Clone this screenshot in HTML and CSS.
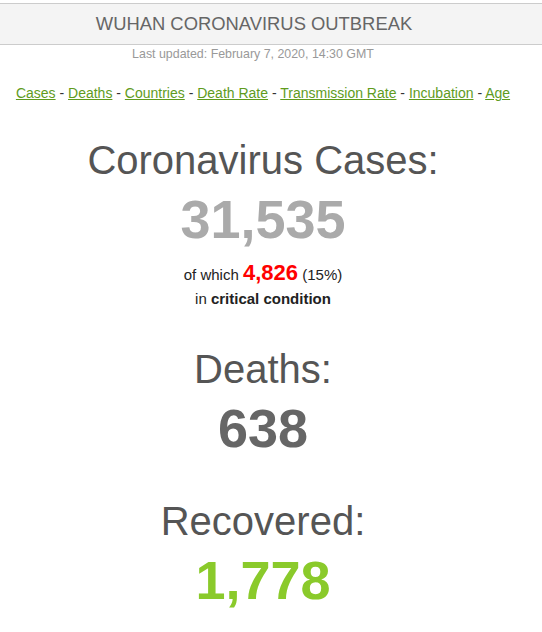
FILE: index.html
```html
<!DOCTYPE html>
<html>
<head>
<meta charset="utf-8">
<link rel="stylesheet" href="styles.css">
</head>
<body>
<div class="header">WUHAN CORONAVIRUS OUTBREAK</div>
<div class="updated">Last updated: February 7, 2020, 14:30 GMT</div>
<div class="main">
  <div class="nav">
    <a href="#">Cases</a> - <a href="#">Deaths</a> - <a href="#">Countries</a> - <a href="#">Death Rate</a> - <a href="#">Transmission Rate</a> - <a href="#">Incubation</a> - <a href="#">Age</a>
  </div>
  <div class="stat stat-cases">
    <h1 class="stat-title">Coronavirus Cases:</h1>
    <div class="stat-number num-cases">31,535</div>
    <div class="critical critical-first">of which <span class="crit-num">4,826</span> (15%)</div>
    <div class="critical">in <strong>critical condition</strong></div>
  </div>
  <div class="stat stat-deaths">
    <h1 class="stat-title">Deaths:</h1>
    <div class="stat-number num-deaths">638</div>
  </div>
  <div class="stat stat-recovered">
    <h1 class="stat-title">Recovered:</h1>
    <div class="stat-number num-recovered">1,778</div>
  </div>
</div>
</body>
</html>
```
FILE: styles.css
```css
html, body {
  margin: 0;
  padding: 0;
  background: #fff;
  font-family: "Liberation Sans", Arial, Helvetica, sans-serif;
}
.header {
  margin-top: 3px;
  background: #f4f4f4;
  border-top: 1px solid #cccccc;
  border-bottom: 1px solid #cccccc;
  color: #666666;
  font-size: 18.4px;
  line-height: 40px;
  text-align: center;
  padding-right: 34px;
}
.updated {
  color: #999999;
  font-size: 12.4px;
  line-height: 18px;
  text-align: center;
  padding-right: 36px;
}
.main {
  width: 526px;
  text-align: center;
}
.nav {
  margin-top: 21px;
  font-size: 14px;
  line-height: 18px;
  color: #333;
}
.nav a {
  color: #609b1d;
  text-decoration: underline;
}
.stat-title {
  margin: 0;
  font-weight: normal;
  font-size: 40px;
  line-height: 48px;
  color: #555555;
}
.stat-number {
  margin-top: 3px;
  font-weight: bold;
  font-size: 54px;
  line-height: 64px;
}
.stat-cases { margin-top: 34px; }
.stat-deaths { margin-top: 34px; }
.stat-recovered { margin-top: 37px; }
.num-cases { color: #aaaaaa; }
.num-deaths { color: #666666; }
.num-recovered { color: #8aca2b; }
.critical {
  font-size: 15px;
  line-height: 24px;
  color: #222;
}
.critical-first { margin-top: 10px; }
.crit-num {
  color: #ff0000;
  font-weight: bold;
  font-size: 22px;
}
.critical strong { font-weight: bold; }
```
